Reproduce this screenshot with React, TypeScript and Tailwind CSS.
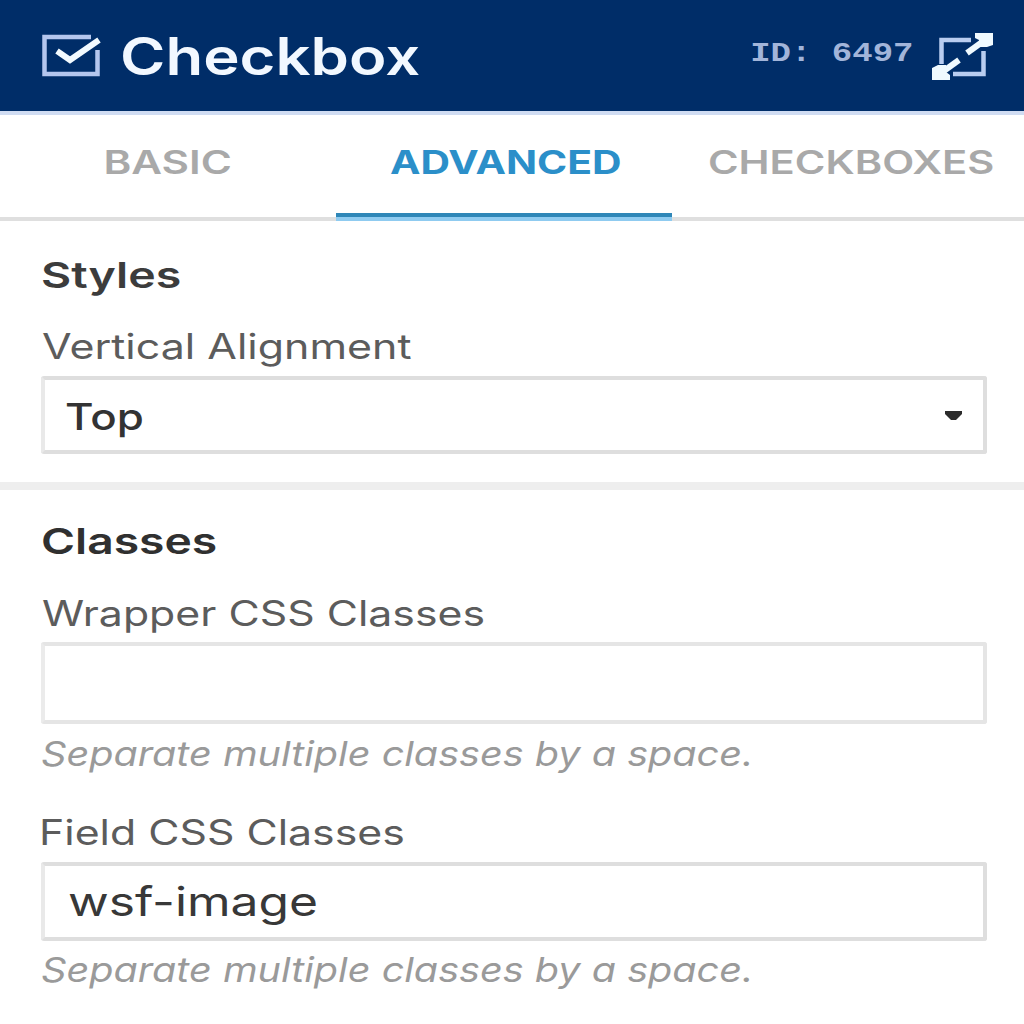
import type { ReactNode } from "react";

function Label({ className, children }: { className: string; children: ReactNode }) {
  return (
    <div className="flex">
      <span className={`block origin-left whitespace-nowrap leading-[40px] ${className}`}>{children}</span>
    </div>
  );
}

function Tab({ active, className, children }: { active?: boolean; className: string; children: ReactNode }) {
  return (
    <button
      type="button"
      className={`flex h-full items-center justify-center border-b-4 pt-[3px] pb-[10px] text-[32px] leading-none ${
        active ? "border-[#8fcbf0] font-bold text-[#2b8fc9] shadow-[inset_0_-4px_0_#2f87b8]" : "border-[#dfdfdf] font-semibold text-[#a9a9a9]"
      }`}
    >
      <span className={`block whitespace-nowrap ${className}`}>{children}</span>
    </button>
  );
}

function CheckboxIcon() {
  return (
    <svg className="h-[44px] w-[60px] shrink-0" viewBox="0 0 60 44" fill="none">
      <path d="M49 3H2.500V40H55.500V16" stroke="#b4c6ee" strokeWidth="4.500" />
      <path d="M15 17L28 26L57 6" stroke="#f2faff" strokeWidth="6" />
    </svg>
  );
}

function ExpandIcon() {
  return (
    <svg className="h-[50px] w-[66px] shrink-0" viewBox="0 0 66 50" fill="none">
      <path d="M42 9H12.500V33" stroke="#b9cdf0" strokeWidth="4.500" />
      <path d="M54.500 20V43H24" stroke="#b9cdf0" strokeWidth="4.500" />
      <path d="M38 22L56 9" stroke="#f0faff" strokeWidth="6" />
      <path d="M46 2H64V14L58 16H50V9L46 7Z" fill="#f0faff" />
      <path d="M30 29L12 42" stroke="#f0faff" strokeWidth="6" />
      <path d="M3 49V37L9 34H17V41L21 44V49Z" fill="#f0faff" />
    </svg>
  );
}

export default function App() {
  return (
    <div className="h-[1024px] w-full overflow-hidden bg-white font-['Inter','Liberation_Sans',sans-serif] text-[#444]">
      <header className="flex h-[115px] items-center border-b-4 border-[#d0dcf2] bg-[#002d68] pt-px pr-[29px] pl-[42px]">
        <CheckboxIcon />
        <h1 className="ml-[18px] w-[300px] origin-left scale-x-[1.185] pt-[2px] text-[52px] leading-none font-semibold text-[#f2f8ff]">
          Checkbox
        </h1>
        <div className="ml-auto flex items-center">
          <span className="block origin-right scale-x-[1.26] pr-[12px] pb-[3px] font-['Liberation_Mono',monospace] text-[27px] leading-none font-bold whitespace-pre text-[#a2b5da]">
            ID: 6497
          </span>
          <ExpandIcon />
        </div>
      </header>

      <nav className="grid h-[106px] grid-cols-[336px_336px_352px]">
        <Tab className="scale-x-[1.32]">BASIC</Tab>
        <Tab active className="translate-x-[2px] scale-x-[1.275]">ADVANCED</Tab>
        <Tab className="translate-x-[3px] scale-x-[1.3]">CHECKBOXES</Tab>
      </nav>

      <section className="h-[269px] border-b-8 border-[#eeeeee] pt-[34px] pr-[37px] pl-[41px]">
        <Label className="scale-x-[1.29] text-[36px] font-semibold text-[#3c3c3c]">Styles</Label>
        <div className="mt-[31px]">
          <Label className="translate-x-px scale-x-[1.227] text-[35px] text-[#5c5c5c]">Vertical Alignment</Label>
        </div>
        <div className="mt-[10px] flex h-[78px] items-center justify-between rounded-[3px] border-4 border-[#dedede] border-l-[#e9e9e9] pr-[21px] pl-[20px]">
          <Label className="mt-1 scale-x-[1.186] text-[37px] font-medium text-[#333]">Top</Label>
          <svg className="h-[9px] w-[17px]" viewBox="0 0 17 9">
            <path d="M0 0H17V3L11 9H6L0 3Z" fill="#2b2b2b" />
          </svg>
        </div>
      </section>

      <section className="pt-[31px] pr-[37px] pl-[41px]">
        <Label className="scale-x-[1.284] text-[36px] font-semibold text-[#303030]">Classes</Label>
        <div className="mt-[32px]">
          <Label className="translate-x-px scale-x-[1.223] text-[35px] text-[#5c5c5c]">Wrapper CSS Classes</Label>
        </div>
        <div className="mt-[9px] h-[82px] rounded-[3px] border-4 border-[#e5e5e5] border-l-[#ebebeb]" />
        <div className="mt-[10px]">
          <Label className="scale-x-[1.165] text-[34px] text-[#9a9a9a] italic">Separate multiple classes by a space.</Label>
        </div>
        <div className="mt-[38px]">
          <Label className="-translate-x-[2px] scale-x-[1.223] text-[35px] text-[#5c5c5c]">Field CSS Classes</Label>
        </div>
        <div className="mt-[10px] flex h-[79px] items-center rounded-[3px] border-4 border-[#dedede] border-l-[#e9e9e9] pl-[23px]">
          <Label className="scale-x-[1.244] text-[40px] text-[#383838]">wsf-image</Label>
        </div>
        <div className="mt-[9px]">
          <Label className="scale-x-[1.165] text-[34px] text-[#9a9a9a] italic">Separate multiple classes by a space.</Label>
        </div>
      </section>
    </div>
  );
}
